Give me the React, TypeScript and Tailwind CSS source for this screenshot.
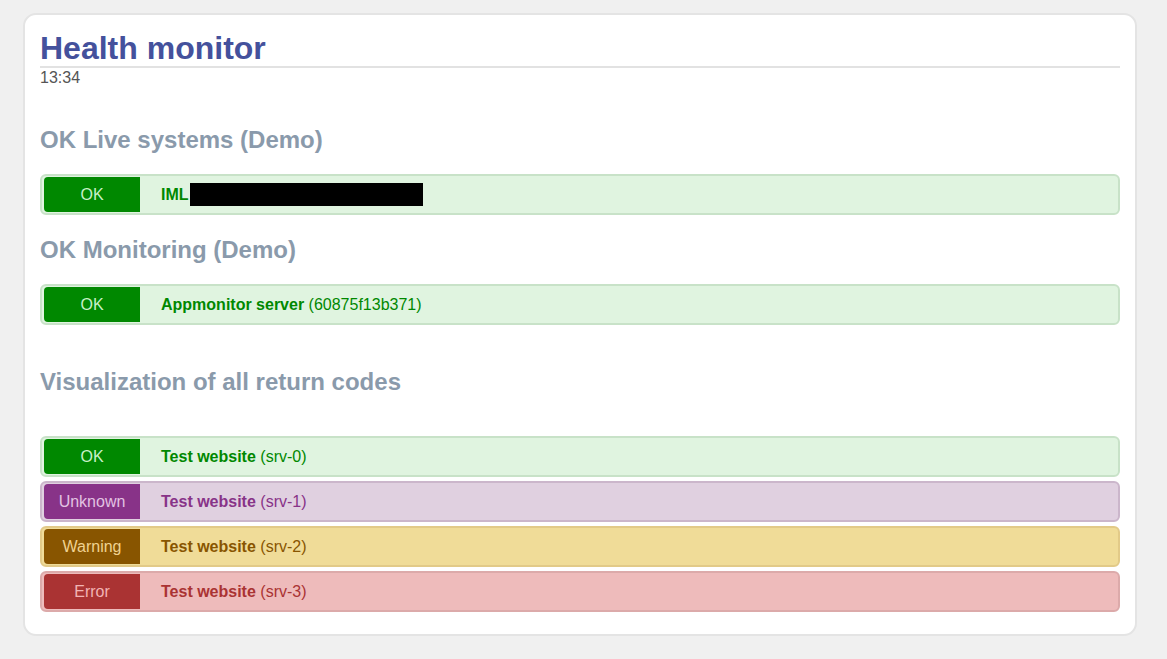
import React from "react";

type Row = {
  status: string;
  name: string;
  extra?: string;
  redact?: boolean;
  bg: string;
  border: string;
  badge: string;
  badgeText: string;
  text: string;
};

const ok = {
  bg: "bg-[#e0f4e0]",
  border: "border-[#c8e2c8]",
  badge: "bg-[#008800]",
  badgeText: "text-[#c8f0c8]",
  text: "text-[#008800]",
};

function StatusRow({ r }: { r: Row }) {
  return (
    <div className={`flex items-center h-[41px] rounded-[6px] border-2 ${r.border} ${r.bg} pl-[2px] py-px`}>
      <div className={`w-[96px] h-[35px] rounded-l-[4px] flex items-center justify-center text-[16px] ${r.badge} ${r.badgeText}`}>
        {r.status}
      </div>
      <div className={`ml-[21px] flex items-center text-[16px] ${r.text}`}>
        <span className="font-bold">{r.name}</span>
        {r.extra && <span>&nbsp;{r.extra}</span>}
        {r.redact && <span className="inline-block ml-[1px] w-[233px] h-[23px] bg-black" />}
      </div>
    </div>
  );
}

export default function App() {
  const testRows: Row[] = [
    { status: "OK", name: "Test website", extra: "(srv-0)", ...ok },
    {
      status: "Unknown",
      name: "Test website",
      extra: "(srv-1)",
      bg: "bg-[#e0d0e0]",
      border: "border-[#cbb6cb]",
      badge: "bg-[#883388]",
      badgeText: "text-[#e2c2e2]",
      text: "text-[#883388]",
    },
    {
      status: "Warning",
      name: "Test website",
      extra: "(srv-2)",
      bg: "bg-[#f0dc98]",
      border: "border-[#e2ca88]",
      badge: "bg-[#885500]",
      badgeText: "text-[#f0d290]",
      text: "text-[#885500]",
    },
    {
      status: "Error",
      name: "Test website",
      extra: "(srv-3)",
      bg: "bg-[#eebbbb]",
      border: "border-[#dcaaaa]",
      badge: "bg-[#aa3333]",
      badgeText: "text-[#f2b4b4]",
      text: "text-[#aa3333]",
    },
  ];

  return (
    <div className="min-h-[659px] w-full bg-[#f0f0f0] pt-[13px] pb-[25px] font-['Liberation_Sans',Arial,sans-serif]">
      <div className="ml-[23px] w-[1114px] bg-white border-2 border-[#e4e4e4] rounded-[13px] pt-[16px] pb-[22px] px-[15px]">
        <h1 className="text-[32px] leading-[35px] font-bold text-[#44519c] border-b-2 border-[#e2e2e2]">
          Health monitor
        </h1>
        <div className="pt-px text-[16px] leading-[18px] text-[#555555]">13:34</div>

        <h2 className="mt-[39px] text-[24px] leading-[28px] font-bold text-[#8a9aab]">OK Live systems (Demo)</h2>
        <div className="mt-[20px]">
          <StatusRow r={{ status: "OK", name: "IML", redact: true, ...ok }} />
        </div>

        <h2 className="mt-[21px] text-[24px] leading-[28px] font-bold text-[#8a9aab]">OK Monitoring (Demo)</h2>
        <div className="mt-[20px]">
          <StatusRow r={{ status: "OK", name: "Appmonitor server", extra: "(60875f13b371)", ...ok }} />
        </div>

        <h2 className="mt-[43px] text-[24px] leading-[28px] font-bold text-[#8a9aab]">Visualization of all return codes</h2>
        <div className="mt-[40px] flex flex-col gap-[4px]">
          {testRows.map((r) => (
            <StatusRow key={r.extra} r={r} />
          ))}
        </div>
      </div>
    </div>
  );
}
